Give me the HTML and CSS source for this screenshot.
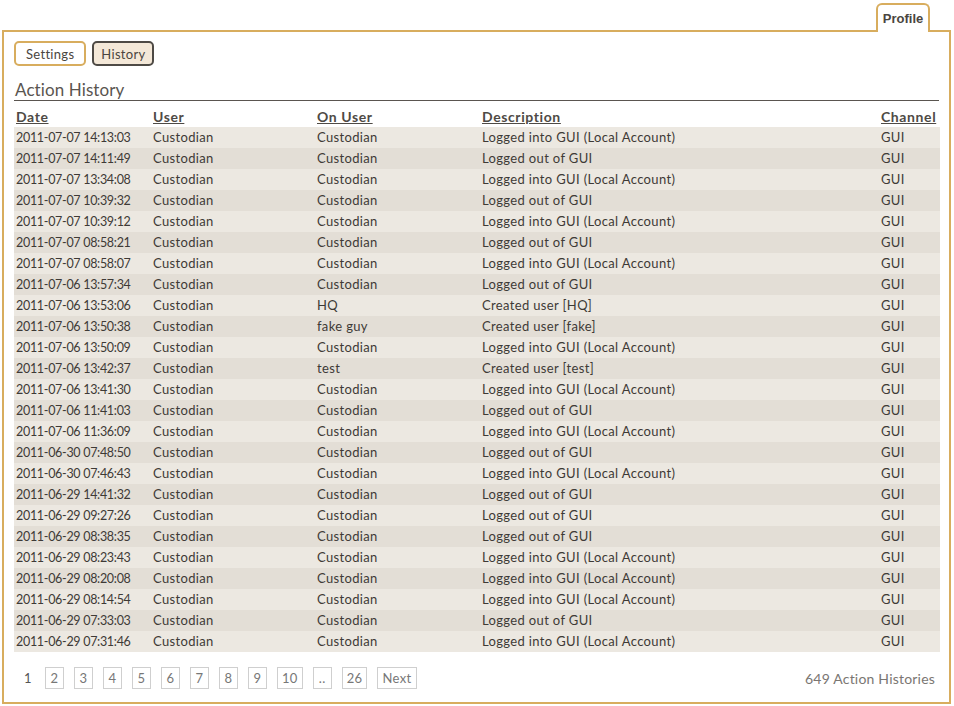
FILE: index.html
```html
<!DOCTYPE html>
<html>
<head>
<meta charset="utf-8">
<link rel="stylesheet" href="styles.css">
</head>
<body>
<div class="tabs">
  <div class="tab">Profile</div>
</div>
<div class="panel">
  <div class="subnav">
    <button class="btn">Settings</button>
    <button class="btn active">History</button>
  </div>
  <h2 class="title">Action History</h2>
  <table class="grid">
    <colgroup>
      <col class="c-date"><col class="c-user"><col class="c-on"><col class="c-desc"><col class="c-chan">
    </colgroup>
    <thead>
      <tr><th>Date</th><th>User</th><th>On User</th><th>Description</th><th>Channel</th></tr>
    </thead>
    <tbody>
      <tr><td>2011-07-07 14:13:03</td><td>Custodian</td><td>Custodian</td><td>Logged into GUI (Local Account)</td><td>GUI</td></tr>
      <tr><td>2011-07-07 14:11:49</td><td>Custodian</td><td>Custodian</td><td>Logged out of GUI</td><td>GUI</td></tr>
      <tr><td>2011-07-07 13:34:08</td><td>Custodian</td><td>Custodian</td><td>Logged into GUI (Local Account)</td><td>GUI</td></tr>
      <tr><td>2011-07-07 10:39:32</td><td>Custodian</td><td>Custodian</td><td>Logged out of GUI</td><td>GUI</td></tr>
      <tr><td>2011-07-07 10:39:12</td><td>Custodian</td><td>Custodian</td><td>Logged into GUI (Local Account)</td><td>GUI</td></tr>
      <tr><td>2011-07-07 08:58:21</td><td>Custodian</td><td>Custodian</td><td>Logged out of GUI</td><td>GUI</td></tr>
      <tr><td>2011-07-07 08:58:07</td><td>Custodian</td><td>Custodian</td><td>Logged into GUI (Local Account)</td><td>GUI</td></tr>
      <tr><td>2011-07-06 13:57:34</td><td>Custodian</td><td>Custodian</td><td>Logged out of GUI</td><td>GUI</td></tr>
      <tr><td>2011-07-06 13:53:06</td><td>Custodian</td><td>HQ</td><td>Created user [HQ]</td><td>GUI</td></tr>
      <tr><td>2011-07-06 13:50:38</td><td>Custodian</td><td>fake guy</td><td>Created user [fake]</td><td>GUI</td></tr>
      <tr><td>2011-07-06 13:50:09</td><td>Custodian</td><td>Custodian</td><td>Logged into GUI (Local Account)</td><td>GUI</td></tr>
      <tr><td>2011-07-06 13:42:37</td><td>Custodian</td><td>test</td><td>Created user [test]</td><td>GUI</td></tr>
      <tr><td>2011-07-06 13:41:30</td><td>Custodian</td><td>Custodian</td><td>Logged into GUI (Local Account)</td><td>GUI</td></tr>
      <tr><td>2011-07-06 11:41:03</td><td>Custodian</td><td>Custodian</td><td>Logged out of GUI</td><td>GUI</td></tr>
      <tr><td>2011-07-06 11:36:09</td><td>Custodian</td><td>Custodian</td><td>Logged into GUI (Local Account)</td><td>GUI</td></tr>
      <tr><td>2011-06-30 07:48:50</td><td>Custodian</td><td>Custodian</td><td>Logged out of GUI</td><td>GUI</td></tr>
      <tr><td>2011-06-30 07:46:43</td><td>Custodian</td><td>Custodian</td><td>Logged into GUI (Local Account)</td><td>GUI</td></tr>
      <tr><td>2011-06-29 14:41:32</td><td>Custodian</td><td>Custodian</td><td>Logged out of GUI</td><td>GUI</td></tr>
      <tr><td>2011-06-29 09:27:26</td><td>Custodian</td><td>Custodian</td><td>Logged out of GUI</td><td>GUI</td></tr>
      <tr><td>2011-06-29 08:38:35</td><td>Custodian</td><td>Custodian</td><td>Logged out of GUI</td><td>GUI</td></tr>
      <tr><td>2011-06-29 08:23:43</td><td>Custodian</td><td>Custodian</td><td>Logged into GUI (Local Account)</td><td>GUI</td></tr>
      <tr><td>2011-06-29 08:20:08</td><td>Custodian</td><td>Custodian</td><td>Logged into GUI (Local Account)</td><td>GUI</td></tr>
      <tr><td>2011-06-29 08:14:54</td><td>Custodian</td><td>Custodian</td><td>Logged into GUI (Local Account)</td><td>GUI</td></tr>
      <tr><td>2011-06-29 07:33:03</td><td>Custodian</td><td>Custodian</td><td>Logged out of GUI</td><td>GUI</td></tr>
      <tr><td>2011-06-29 07:31:46</td><td>Custodian</td><td>Custodian</td><td>Logged into GUI (Local Account)</td><td>GUI</td></tr>
    </tbody>
  </table>
  <div class="footer">
    <div class="pager">
      <span class="cur">1</span>
      <a class="pg">2</a><a class="pg">3</a><a class="pg">4</a><a class="pg">5</a><a class="pg">6</a><a class="pg">7</a><a class="pg">8</a><a class="pg">9</a><a class="pg">10</a><a class="pg">..</a><a class="pg">26</a><a class="pg">Next</a>
    </div>
    <div class="count">649 Action Histories</div>
  </div>
</div>
</body>
</html>
```
FILE: styles.css
```css
html, body {
  margin: 0;
  padding: 0;
  background: #fff;
}
body {
  font-family: "Lato", "Open Sans", sans-serif;
  color: #444;
  width: 954px;
  height: 706px;
  letter-spacing: 0.35px;
}
.tabs {
  display: flex;
  justify-content: flex-end;
  padding: 3px 24px 0 0;
  height: 27px;
}
.tab {
  position: relative;
  z-index: 2;
  border: 2px solid #d8ad5e;
  border-bottom: none;
  border-radius: 6px 6px 0 0;
  background: #fff;
  height: 29px;
  width: 54px;
  box-sizing: border-box;
  padding-top: 6px;
  text-align: center;
  font-family: "Liberation Sans", Arial, sans-serif;
  font-weight: bold;
  font-size: 13px;
  letter-spacing: 0;
  color: #4a4540;
}
.panel {
  margin-left: 2px;
  width: 949px;
  height: 674px;
  box-sizing: border-box;
  border: 2px solid #d8ad5e;
  padding: 9px 10px 0 10px;
}
.subnav {
  display: flex;
  gap: 6px;
}
.btn {
  font-family: inherit;
  font-size: 13px;
  letter-spacing: 0.3px;
  color: #4a4540;
  background: #fff;
  border: 2px solid #d8ad5e;
  border-radius: 5px;
  height: 25px;
  padding: 0 10px;
  line-height: 20px;
}
.btn.active {
  background: #f4e8d8;
  border-color: #4e4a45;
  padding: 0 7px;
}
.title {
  margin: 15px 0 0 0;
  font-weight: normal;
  font-size: 17px;
  line-height: 18px;
  letter-spacing: 0.1px;
  color: #5a5550;
  padding-left: 1px;
  border-bottom: 1px solid #5a5550;
  padding-bottom: 1px;
}
.grid {
  width: 926px;
  table-layout: fixed;
  border-collapse: collapse;
  margin-top: 3px;
  font-size: 13px;
  color: #3e3a36;
}
.c-date { width: 137px; }
.c-user { width: 164px; }
.c-on { width: 165px; }
.c-desc { width: 399px; }
.c-chan { width: 61px; }
.grid th {
  text-align: left;
  font-weight: bold;
  text-decoration: underline;
  font-size: 14px;
  letter-spacing: 0.6px;
  color: #4e4a45;
  padding: 0 0 2px 2px;
  height: 23px;
  box-sizing: border-box;
  vertical-align: bottom;
  white-space: nowrap;
}
.grid td {
  padding: 3px 0 0 2px;
  height: 18px;
  line-height: 15px;
  vertical-align: baseline;
  white-space: nowrap;
}
.grid td:first-child {
  font-size: 12.5px;
  letter-spacing: -0.3px;
}
.grid tbody tr:nth-child(odd) { background: #ece8e1; }
.grid tbody tr:nth-child(even) { background: #e3ded6; }
.footer {
  display: flex;
  justify-content: space-between;
  align-items: center;
  margin-top: 15px;
}
.pager {
  display: flex;
  align-items: center;
  gap: 10px;
  padding-left: 10px;
  font-size: 13px;
  color: #555;
}
.pager .cur {
  margin-right: 3px;
}
.pg {
  display: inline-block;
  min-width: 19px;
  height: 22px;
  line-height: 20px;
  box-sizing: border-box;
  text-align: center;
  border: 1px solid #cfcfcf;
  padding: 0 4px;
  color: #777;
}
.count {
  font-size: 14px;
  letter-spacing: 0.2px;
  color: #7a7672;
  padding-right: 4px;
}
```
